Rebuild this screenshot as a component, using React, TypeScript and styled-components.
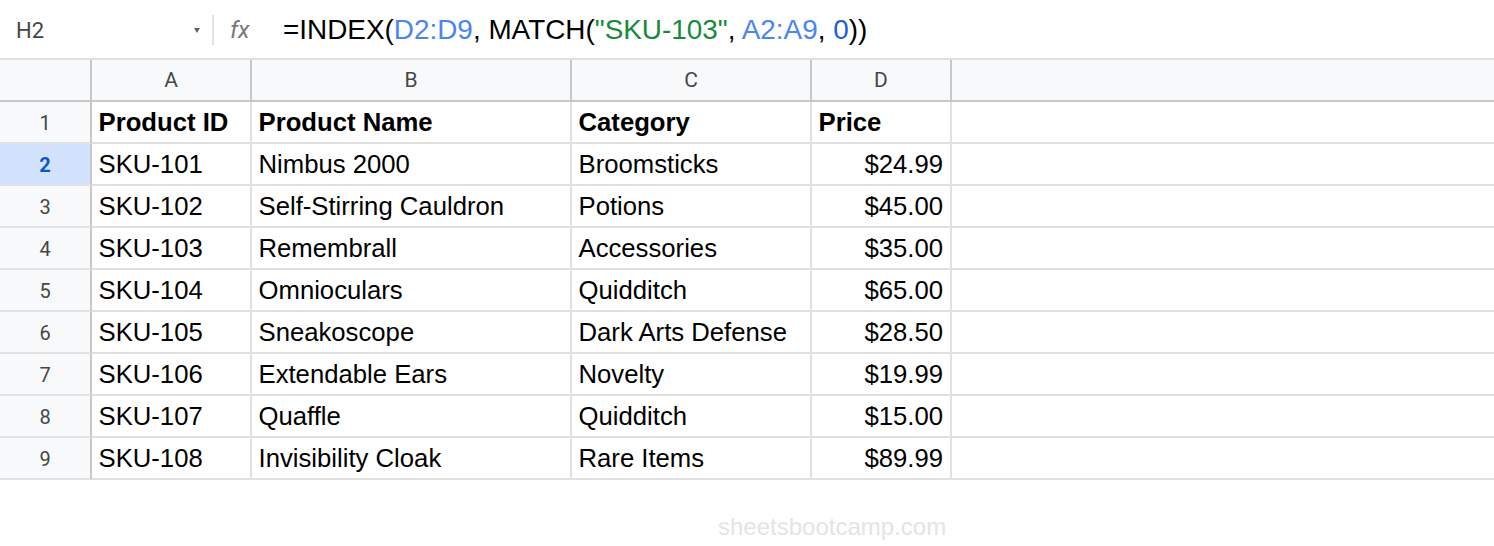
import styled, { createGlobalStyle } from "styled-components";

const GlobalStyle = createGlobalStyle`
  html, body {
    margin: 0;
    padding: 0;
    background: #ffffff;
  }
  body {
    font-family: "Liberation Sans", Arial, sans-serif;
  }
`;

const Page = styled.div`
  width: 1494px;
  height: 546px;
  overflow: hidden;
  display: flex;
  flex-direction: column;
  background: #fff;
`;

const FormulaBar = styled.div`
  height: 60px;
  display: flex;
  align-items: center;
  padding-top: 2px;
  box-sizing: border-box;
  border-bottom: 2px solid #e1e1e1;
  flex-shrink: 0;
`;

const NameBox = styled.div`
  width: 203px;
  display: flex;
  align-items: center;
  justify-content: space-between;
  padding-left: 16px;
  padding-right: 3px;
  box-sizing: border-box;
  font-family: Roboto, "Liberation Sans", sans-serif;
  font-size: 22px;
  color: #444746;
`;

const Caret = styled.span`
  width: 0;
  height: 0;
  border-left: 3.5px solid transparent;
  border-right: 3.5px solid transparent;
  border-top: 5px solid #5f6368;
  margin-top: 1px;
`;

const Divider = styled.div`
  width: 2px;
  height: 30px;
  background: #e1e3e6;
  margin-left: 9px;
`;

const Fx = styled.div`
  font-family: Roboto, "Liberation Sans", sans-serif;
  font-style: italic;
  font-size: 24px;
  color: #777a7e;
  margin-left: 16px;
  width: 53px;
`;

const Formula = styled.div`
  font-size: 27.9px;
  color: #000;
  white-space: pre;
`;

const Token = styled.span<{ $kind: "range" | "string" | "number" }>`
  color: ${(p) =>
    p.$kind === "range" ? "#4a86f0" : p.$kind === "string" ? "#188a3c" : "#1a5fd8"};
`;

const Grid = styled.div`
  display: grid;
  grid-template-columns: 92px 160px 320px 240px 140px 1fr;
  grid-auto-rows: 42px;
`;

const Corner = styled.div`
  background: #f8f9fa;
  border-right: 2px solid #c7c7c7;
  border-bottom: 2px solid #c7c7c7;
`;

const ColHead = styled.div<{ $last?: boolean }>`
  background: #f8f9fa;
  border-right: ${(p) => (p.$last ? "none" : "2px solid #c7c7c7")};
  border-bottom: 2px solid #c7c7c7;
  display: flex;
  align-items: center;
  justify-content: center;
  font-family: Roboto, "Liberation Sans", sans-serif;
  font-size: 21px;
  color: #444746;
`;

const RowHead = styled.div<{ $active?: boolean }>`
  background: ${(p) => (p.$active ? "#d3e3fd" : "#f8f9fa")};
  border-right: 2px solid #c7c7c7;
  border-bottom: 2px solid #e1e1e1;
  display: flex;
  align-items: center;
  justify-content: center;
  padding-top: 1px;
  font-family: Roboto, "Liberation Sans", sans-serif;
  font-size: 20px;
  font-weight: ${(p) => (p.$active ? 700 : 400)};
  color: ${(p) => (p.$active ? "#0b57d0" : "#444746")};
`;

const Cell = styled.div<{ $bold?: boolean; $right?: boolean; $last?: boolean }>`
  border-right: ${(p) => (p.$last ? "none" : "2px solid #e1e1e1")};
  border-bottom: 2px solid #e1e1e1;
  display: flex;
  align-items: center;
  justify-content: ${(p) => (p.$right ? "flex-end" : "flex-start")};
  padding: 1px 7px 0 6.5px;
  font-size: 25.7px;
  font-weight: ${(p) => (p.$bold ? 700 : 400)};
  color: #000;
  white-space: nowrap;
  overflow: hidden;
`;

const Footer = styled.div`
  flex: 1;
  display: flex;
  align-items: flex-end;
  padding-left: 718px;
  padding-bottom: 5px;
`;

const Watermark = styled.div`
  font-size: 24px;
  color: #e4e4e4;
`;

const rows = [
  ["SKU-101", "Nimbus 2000", "Broomsticks", "$24.99"],
  ["SKU-102", "Self-Stirring Cauldron", "Potions", "$45.00"],
  ["SKU-103", "Remembrall", "Accessories", "$35.00"],
  ["SKU-104", "Omnioculars", "Quidditch", "$65.00"],
  ["SKU-105", "Sneakoscope", "Dark Arts Defense", "$28.50"],
  ["SKU-106", "Extendable Ears", "Novelty", "$19.99"],
  ["SKU-107", "Quaffle", "Quidditch", "$15.00"],
  ["SKU-108", "Invisibility Cloak", "Rare Items", "$89.99"],
];

const App = () => {
  return (
    <Page>
      <GlobalStyle />
      <FormulaBar>
        <NameBox>
          <span>H2</span>
          <Caret />
        </NameBox>
        <Divider />
        <Fx>fx</Fx>
        <Formula>
          =INDEX(<Token $kind="range">D2:D9</Token>, MATCH(
          <Token $kind="string">"SKU-103"</Token>, <Token $kind="range">A2:A9</Token>,{" "}
          <Token $kind="number">0</Token>))
        </Formula>
      </FormulaBar>
      <Grid>
        <Corner />
        <ColHead>A</ColHead>
        <ColHead>B</ColHead>
        <ColHead>C</ColHead>
        <ColHead>D</ColHead>
        <ColHead $last />

        <RowHead>1</RowHead>
        <Cell $bold>Product ID</Cell>
        <Cell $bold>Product Name</Cell>
        <Cell $bold>Category</Cell>
        <Cell $bold>Price</Cell>
        <Cell $last />

        {rows.map((r, i) => (
          <>
            <RowHead key={"h" + i} $active={i === 0}>
              {i + 2}
            </RowHead>
            <Cell>{r[0]}</Cell>
            <Cell>{r[1]}</Cell>
            <Cell>{r[2]}</Cell>
            <Cell $right>{r[3]}</Cell>
            <Cell $last />
          </>
        ))}
      </Grid>
      <Footer>
        <Watermark>sheetsbootcamp.com</Watermark>
      </Footer>
    </Page>
  );
};

export default App;
